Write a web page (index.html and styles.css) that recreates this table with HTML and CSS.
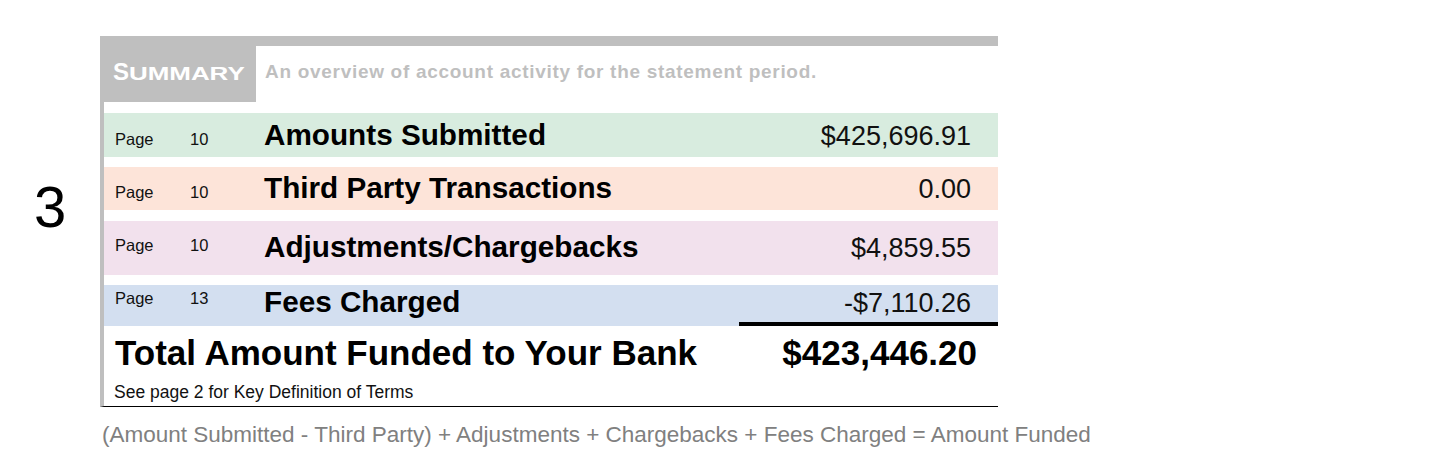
FILE: index.html
```html
<!DOCTYPE html>
<html lang="en">
<head>
<meta charset="utf-8">
<title>Summary</title>
<link rel="stylesheet" href="styles.css">
</head>
<body>
<div class="layout">
  <div class="side">3</div>
  <div class="main-col">
    <div class="card">
      <div class="hdr">
        <div class="sumbox"><span class="cap">S</span><span class="sc">UMMARY</span></div>
        <div class="intro">An overview of account activity for the statement period.</div>
      </div>
      <div class="row row-green">
        <div class="meta"><span class="pg">Page</span><span>10</span></div>
        <div class="main"><span class="label">Amounts Submitted</span><span class="amt">$425,696.91</span></div>
      </div>
      <div class="row row-peach">
        <div class="meta"><span class="pg">Page</span><span>10</span></div>
        <div class="main"><span class="label">Third Party Transactions</span><span class="amt">0.00</span></div>
      </div>
      <div class="row row-pink">
        <div class="meta"><span class="pg">Page</span><span>10</span></div>
        <div class="main"><span class="label">Adjustments/Chargebacks</span><span class="amt">$4,859.55</span></div>
      </div>
      <div class="row row-blue">
        <div class="meta"><span class="pg">Page</span><span>13</span></div>
        <div class="main"><span class="label">Fees Charged</span><span class="amt">-$7,110.26</span></div>
      </div>
      <div class="total">
        <div class="total-label">Total Amount Funded to Your Bank</div>
        <div class="total-value">$423,446.20</div>
      </div>
      <div class="note">See page 2 for Key Definition of Terms</div>
    </div>
    <div class="formula">(Amount Submitted - Third Party) + Adjustments + Chargebacks + Fees Charged = Amount Funded</div>
  </div>
</div>
</body>
</html>
```

FILE: styles.css
```css
html, body {
  margin: 0;
  padding: 0;
  background: #ffffff;
}
body {
  font-family: "Liberation Sans", Arial, sans-serif;
  color: #000;
}
.layout {
  display: flex;
  padding-top: 36px;
}
.side {
  width: 66px;
  padding-left: 34px;
  padding-top: 141.9px;
  font-size: 58px;
  line-height: 1;
}
.main-col {
  width: 898px;
}
.card {
  box-sizing: border-box;
  width: 898px;
  border-top: 10px solid #bfbfbf;
  border-left: 4px solid #bfbfbf;
  border-bottom: 1px solid #000;
  padding-bottom: 4.3px;
}
.hdr {
  display: flex;
  height: 56px;
}
.sumbox {
  box-sizing: border-box;
  width: 152px;
  height: 56px;
  background: #bfbfbf;
  color: #fff;
  font-weight: bold;
  font-size: 24px;
  line-height: 1;
  padding-left: 9px;
  padding-top: 14.4px;
  white-space: nowrap;
}
.sumbox .sc {
  display: inline-block;
  font-size: 18px;
  transform: scaleX(1.44);
  transform-origin: left bottom;
}
.intro {
  margin-left: 9px;
  padding-top: 15.9px;
  font-size: 19px;
  letter-spacing: 0.7px;
  line-height: 1;
  font-weight: bold;
  color: #bfbfbf;
  white-space: nowrap;
}
.row {
  display: flex;
}
.row-green { background: #d8ecdf; height: 44px; margin-top: 11px; }
.row-peach { background: #fde4d9; height: 43px; margin-top: 10px; }
.row-pink  { background: #f2e1ed; height: 54px; margin-top: 11px; }
.row-blue  { background: #d3dff0; height: 41px; margin-top: 10px; }

.meta {
  box-sizing: border-box;
  width: 160px;
  padding-left: 11px;
  display: flex;
  align-self: flex-start;
  font-size: 16.5px;
  line-height: 1;
  color: #111;
}
.meta .pg { width: 75px; }
.row-green .meta { padding-top: 18px; }
.row-peach .meta { padding-top: 17px; }
.row-pink .meta  { padding-top: 16px; }
.row-blue .meta  { padding-top: 5px; }

.main {
  flex: 1;
  display: flex;
  align-items: baseline;
  align-self: flex-end;
  padding-right: 27px;
}
.row-green .main { padding-bottom: 7.4px; }
.row-peach .main { padding-bottom: 7.4px; }
.row-pink .main  { padding-bottom: 13.4px; }
.row-blue .main  { padding-bottom: 9.4px; }

.label {
  flex: 1;
  font-size: 29.7px;
  font-weight: bold;
  line-height: 1;
  white-space: nowrap;
}
.amt {
  font-size: 27px;
  line-height: 1;
  white-space: nowrap;
  color: #111;
}
.total {
  display: flex;
  align-items: flex-start;
  margin-top: -4px;
  height: 48.4px;
}
.total-label {
  flex: 1;
  padding-left: 11px;
  padding-top: 13.4px;
  font-size: 35px;
  line-height: 1;
  font-weight: bold;
  white-space: nowrap;
}
.total-value {
  box-sizing: border-box;
  width: 259px;
  border-top: 4px solid #000;
  padding-top: 9.4px;
  padding-right: 21px;
  text-align: right;
  font-size: 35px;
  line-height: 1;
  font-weight: bold;
}
.note {
  padding-left: 10px;
  margin-top: 13.8px;
  font-size: 17.5px;
  line-height: 1;
  color: #111;
}
.formula {
  margin-top: 17.25px;
  margin-left: 2px;
  font-size: 22.5px;
  line-height: 1;
  color: #808080;
  white-space: nowrap;
}
```
